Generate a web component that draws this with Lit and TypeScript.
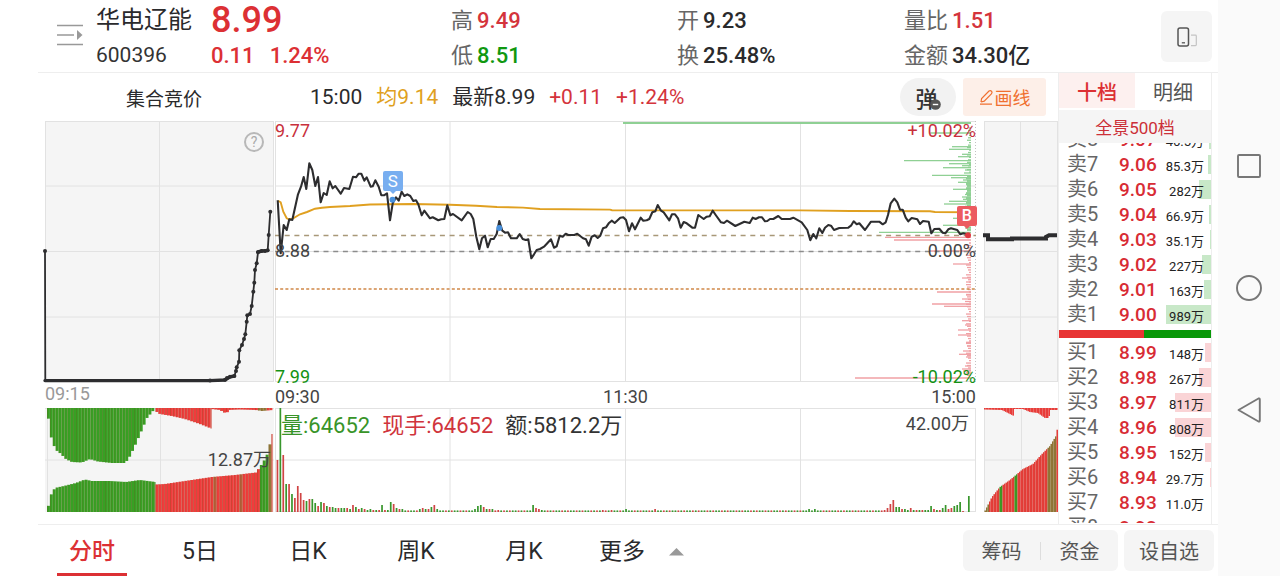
import { LitElement, html, svg, css } from "lit";
import { customElement, state } from "lit/decorators.js";
import { classMap } from "lit/directives/class-map.js";
import { styleMap } from "lit/directives/style-map.js";

type Point = [number, number];

const RED = "#f03c3c";
const GREEN = "#38a024";
const OLIVE = "#94793a";

const PRICE_LINE =
  "277.7,200.3 280.7,253.3 283.7,225 286.7,230 289.3,219.3 292.3,220 298,194.3 301,186.7 303.7,177 306.3,189 309.3,163.3 312.3,170 315.3,186 318,177 320.7,202.3 323.7,193 326.7,195 329.7,181.3 332.7,188.3 335.3,186 340.7,193.7 344,188 349.3,189 353,176.7 356,177.3 358.7,173.7 361.3,173.7 364.3,180.7 366.7,177.3 370.7,186.7 372.7,186.3 375.3,180.3 378.7,186.7 381.3,195.3 384,195.3 387,193.3 390,220.3 392.7,203.3 396,197.3 398.7,200.7 401.7,191.7 404.3,196 407.3,194.3 410.3,196 413.3,201 416,200.3 418.3,204.3 421.7,215.3 424.3,210.7 430,218.3 432.7,217.3 438.3,220.3 441.3,219.3 444.3,219 447.3,205.3 450.3,215.3 453,214 461.7,220.3 467.7,212 470.7,214 473.3,219 476.3,236.7 479.3,249.3 482,238.3 485,235.7 487.7,247.3 490.7,239 493.7,239 496.7,234 499.3,221 502.3,230.7 505,232.7 508,232.3 511,238.3 516.7,238.3 519.7,234 522.7,239 525.7,240 528.3,239.3 531.3,258.3 534,254.3 536.7,250 540,249 544,246.7 551,239.3 554,247.7 556.7,246.3 559.7,235.7 562.7,236.7 565.7,233.7 568.3,235 574.3,235 577.3,233.7 583,238.3 586,239.3 588.7,245.7 591.7,236.7 594.7,235.3 597.7,238 600.3,235.7 603,228.3 606,227.3 608.7,223.3 611.7,220.7 614.7,223 620.3,217.7 623.3,217.3 626,220 629,231.3 632,223.3 635,229.3 640.7,217.7 643.3,220.7 646.7,220.3 649.3,219 652.3,212.3 655.3,211.3 657.7,205 660.7,210.3 663.7,212.3 669.3,220.3 672,214.3 675,214.3 678,218.3 680.7,227.7 683.7,222 686.7,223.3 692.3,227.7 695,227.7 698.3,215 703.7,219 706.7,216.7 709.7,216.3 712.7,210.7 715.7,215 721,222.3 724,223 727,220.7 735.3,226 744.3,221.7 749.7,223 752.7,217.7 755.7,219 759,217.3 762,217.3 765,221.3 767.3,221 770,219 773.3,219 778.3,216 781.7,219 790,219 793.3,217.7 801.7,222.3 807.3,230 810.3,240.3 813.3,234 816.3,238.3 819.3,228.3 822.3,233 825,227.7 828.3,225 831,225.7 834,230 839.3,228 848.3,227.7 851,225.7 853.7,221.3 856.7,224.3 859.3,223.3 865,230 871,221.7 879.3,221.7 882.7,224.3 885.7,222.3 888,215 890.7,203.3 894.3,198.7 897.3,202.3 900,209.7 902.7,209.7 905.7,217.7 908.3,221.3 911.7,218 917.3,219.3 920,224 923,221 928.7,221.7 931.3,233.3 934.3,229 939.3,228.7 942.7,232.7 945.3,233.3 948.3,229.3 951,228.3 957.3,230 960.3,234.3 963.3,233.3 968.3,234.5";

const AVERAGE_LINE =
  "278,200.7 280.7,202.3 283.3,211.7 286.7,218.3 289,219.3 292,219 300,214.3 307,212 315,208.7 322,207.7 330,207 350,206 370,204.5 413,204 450,204.7 476,205.7 497,207 523,207.6 540,209 610,209.6 612,210.2 800,210.4 850,211 930,211.2 935,212 975,212.2";

const AUCTION_LINE: Point[] = [
  [45, 251], [45.3, 380.7], [210, 380.5], [225, 379.8], [227, 378], [230, 376.7], [234.3, 376], [236, 371], [236.7, 367.3],
  [239, 361.7], [239.3, 350.3], [242, 345], [244, 339], [245.3, 334.3], [246.7, 321.7], [247.3, 315.3], [250, 314],
  [251.7, 306], [253.3, 291.7], [254.3, 282.7], [255, 270], [256.7, 263.3], [258, 252.3], [261.7, 251], [265, 251],
  [267.7, 250.3], [268.7, 235], [270.3, 211.7],
];

/* Resting orders by price: [y, left end of the bar] */
const ASK_DEPTH: Point[] = [
  [133, 930], [146.7, 952], [149.3, 949], [154.3, 962], [156.7, 958], [160.7, 904], [163.7, 949], [165.7, 962], [167.7, 943],
  [170, 965], [173, 964], [175.3, 932], [177.7, 951], [180, 963], [182.3, 958], [184.7, 966], [187, 967], [189.3, 953],
  [192, 967], [194.5, 965], [197, 962], [199.3, 963], [201.3, 949], [204, 944], [206.3, 965], [218.3, 953], [225.3, 943],
  [228, 965], [232.3, 879],
];
const BID_DEPTH: Point[] = [
  [237.3, 885], [240, 894], [251, 930], [264, 953], [278, 962], [282, 966], [292, 937], [295, 966], [299, 962], [301.5, 965],
  [304, 932], [306.3, 944], [320.7, 962], [325, 965], [330, 958], [335, 958], [342.3, 966], [346, 967], [351, 963],
  [354.3, 959], [357, 966], [366, 965], [369, 962], [371, 963], [374, 965], [378, 855],
];

/* Minute volumes that rise above the floor: index -> [height, rising] */
const VOLUME: Record<number, [number, boolean]> = {
  0: [52, true], 1: [104, false], 2: [57, true], 3: [28, false], 4: [28, true], 5: [18, false], 6: [14, true], 7: [26, true],
  8: [19, true], 9: [12, true], 10: [11, false], 11: [13, true], 12: [13, false], 13: [9, false], 14: [6, true],
  15: [10, false], 16: [9, true], 17: [6, false], 18: [5, true], 19: [5, false], 20: [4, false], 21: [4, true], 22: [4, false],
  23: [4, false], 24: [4, true], 25: [3, false], 26: [7, true], 27: [5, false], 28: [3, true], 29: [4, false], 30: [3, true],
  31: [2, false], 32: [3, false], 33: [2, true], 34: [2, false], 35: [2, true], 36: [7, false], 37: [2, true], 38: [2, false],
  39: [10, false], 40: [8, true], 41: [4, false], 42: [3, true], 43: [3, false], 49: [3, false], 50: [4, true], 51: [3, false],
  52: [3, true], 53: [5, false], 54: [7, true], 55: [3, false], 68: [3, false], 69: [6, false], 70: [7, false], 71: [5, true],
  72: [3, false], 73: [3, true], 74: [3, false], 76: [2, true], 88: [7, false], 89: [4, true], 90: [3, true], 91: [2, false],
  112: [2, true], 115: [2, true], 120: [3, false], 130: [3, true], 183: [3, false], 185: [3, false], 209: [2, true],
  210: [4, true], 211: [8, true], 212: [12, true], 213: [5, false], 214: [5, false], 215: [3, true], 216: [3, false],
  217: [2, false], 218: [4, true], 219: [2, false], 220: [2, true], 221: [2, false], 222: [2, true], 223: [2, false],
  224: [2, false], 225: [6, false], 226: [3, true], 227: [2, false], 228: [2, true], 229: [4, false], 230: [7, false],
  231: [3, true], 232: [4, true], 233: [6, false], 234: [7, false], 235: [10, false], 236: [1, true], 237: [0, true],
  238: [16, false],
};

const SELLS: [string, string, string, number][] = [
  ["卖8", "9.07", "46.5万", 2],
  ["卖7", "9.06", "85.3万", 3],
  ["卖6", "9.05", "282万", 12],
  ["卖5", "9.04", "66.9万", 2],
  ["卖4", "9.03", "35.1万", 1],
  ["卖3", "9.02", "227万", 9],
  ["卖2", "9.01", "163万", 7],
  ["卖1", "9.00", "989万", 45],
];
const BUYS: [string, string, string, number][] = [
  ["买1", "8.99", "148万", 6],
  ["买2", "8.98", "267万", 12],
  ["买3", "8.97", "811万", 36],
  ["买4", "8.96", "808万", 36],
  ["买5", "8.95", "152万", 6],
  ["买6", "8.94", "29.7万", 1],
  ["买7", "8.93", "11.0万", 0],
  ["买8", "8.92", "98.2万", 0],
];

/* Height of a profile at x, by linear interpolation */
function at(profile: Point[], x: number): number {
  for (let i = 1; i < profile.length; i++) {
    const [x0, y0] = profile[i - 1];
    const [x1, y1] = profile[i];
    if (x <= x1) return x1 === x0 ? y1 : y0 + ((y1 - y0) * (x - x0)) / (x1 - x0);
  }
  return profile[profile.length - 1][1];
}

/* A run of close bars between a profile and a base line */
function bars(profile: Point[], base: number, step: number, colour: (x: number) => string, seam = 0.35) {
  const out = [];
  const end = profile[profile.length - 1][0];
  for (let x = profile[0][0]; x < end - 0.5; x += step) {
    const y = at(profile, x + step / 2);
    const w = Math.min(step, end - x);
    const c = colour(x);
    out.push(svg`<rect x=${x} y=${Math.min(y, base)} width=${w} height=${Math.abs(base - y)} fill=${c} />
      <rect x=${x} y=${Math.min(y, base)} width="0.8" height=${Math.abs(base - y)} fill="#6a5a20" opacity=${seam} />`);
  }
  return out;
}

const lines = (xs: number[], ys: number[], x0: number, x1: number, y0: number, y1: number) => svg`
  ${xs.map((x) => svg`<line x1=${x} x2=${x} y1=${y0} y2=${y1} stroke="#e2e2e2" />`)}
  ${ys.map((y) => svg`<line x1=${x0} x2=${x1} y1=${y} y2=${y} stroke="#e2e2e2" />`)}`;

const PRICE_ROWS = [121.5, 186, 251.5, 317, 381.5];

@customElement("auction-chart")
class AuctionChart extends LitElement {
  static styles = css`
    :host { display: block; position: relative; }
    svg { display: block; width: 100%; overflow: visible; }
    .price { height: 261px; background: #f5f5f5; }
    .volume { height: 104px; background: #f5f5f5; }
    .axis { height: 26px; line-height: 24px; font-size: 18px; color: #999; }
    .help {
      position: absolute; top: 11px; right: 10px; width: 20px; height: 20px; padding: 0;
      box-sizing: border-box; border: 2px solid #b8b8b8; border-radius: 50%; background: none;
      color: #aaa; font: 400 14px/16px Roboto, sans-serif;
    }
    .peak { position: absolute; right: 3px; bottom: 40px; font-size: 18px; line-height: 24px; color: #444; }
  `;
  render() {
    const unmatched: Point[] = [[47, 408], [50, 430], [52, 441], [56, 450], [60, 453], [66, 459], [72, 462], [82, 462.5], [90, 459], [98, 461.5], [112, 463], [124, 463], [128, 460], [134, 448], [141, 432], [147, 418], [155.5, 408]];
    const unmatchedBuy: Point[] = [[155.5, 411], [160, 414], [172, 416], [185, 419], [200, 424], [211.5, 428.5]];
    const tail: Point[] = [[211.5, 409], [220, 410], [227, 414], [228, 410], [240, 409.5], [256, 410], [262, 411], [272.5, 410]];
    const matched: Point[] = [[47, 512], [51, 495], [55, 488], [64, 486], [76, 483], [85, 479.5], [92, 481], [110, 481], [126, 482], [140, 480], [155.5, 482]];
    const matchedBuy: Point[] = [[155.5, 484.5], [165, 484], [185, 481], [212, 477], [235, 475], [256, 472.5], [260, 467], [264, 461], [268, 453], [272.5, 434]];
    const mix = (x: number) => (x > 259 && x < 267 ? GREEN : x >= 267 && x < 270 ? OLIVE : (x > 211 && x < 214) || (x > 237 && x < 240) ? "#b5603a" : RED);
    return html`
      <svg class="price" viewBox="45 121 229 261" preserveAspectRatio="none" role="img" aria-label="集合竞价">
        ${lines([45.5, 159.5, 273.5], PRICE_ROWS, 45, 274, 121, 382)}
        <polyline points=${AUCTION_LINE.map((p) => p.join()).join(" ")} fill="none" stroke="#2d2d2f" stroke-width="1.8" />
        <path d="M45 380.6H210L225 380L230 376.8L234.5 376M258 252L261.5 251L267.5 250.6" fill="none" stroke="#2d2d2f" stroke-width="3.4" stroke-linecap="round" />
        ${AUCTION_LINE.filter((_, i) => i !== 1).map(([x, y]) => svg`<circle cx=${x} cy=${y} r="2" fill="#2d2d2f" />`)}
      </svg>
      <button class="help" aria-label="help">?</button>
      <div class="axis">09:15</div>
      <svg class="volume" viewBox="45 408 229 104" preserveAspectRatio="none" aria-hidden="true">
        ${lines([47.5, 160.5], [408.5, 460], 45, 274, 408, 512)}
        ${bars(unmatched, 408, 2.9, () => GREEN)} ${bars(unmatchedBuy, 408, 2.9, () => RED)}
        ${bars(tail, 408, 2.9, (x) => (x > 257 && x < 266 ? OLIVE : RED))}
        ${bars(matched, 512, 2.9, () => GREEN)} ${bars(matchedBuy, 512, 2.9, mix)}
      </svg>
      <div class="peak">12.87万</div>
    `;
  }
}

@customElement("session-chart")
class SessionChart extends LitElement {
  static styles = css`
    :host { display: block; position: relative; font-size: 18px; color: #444; }
    svg { display: block; width: 100%; }
    .price { height: 261px; overflow: visible; }
    .volume { height: 104px; }
    .axis { height: 26px; line-height: 29px; display: flex; justify-content: space-between; }
    .label { position: absolute; line-height: 20px; }
    .left { left: 0; }
    .right { right: 0; }
    .high { top: 0; color: #c8303c; }
    .zero { top: 120px; }
    .low { top: 246px; color: #149214; }
    .mark {
      position: absolute; width: 20px; height: 20px; border-radius: 2px; color: #fff;
      font-size: 17px; line-height: 20px; text-align: center; transform: translateX(-50%);
    }
    .mark::after {
      content: ""; position: absolute; left: 7px; top: 20px;
      border: 3px solid transparent; border-top-color: inherit; border-bottom: 0;
    }
    .sell { left: 16.8%; top: 50px; background: #78aef0; border-color: #78aef0; }
    .buy { left: 98.7%; top: 85px; background: #ec5c60; border-color: #ec5c60; font-weight: 500; font-size: 16px; }
    .legend {
      position: absolute; left: 6px; top: 290px; display: flex; gap: 12px;
      font-size: 22px; line-height: 30px; white-space: nowrap; color: #333;
    }
    .green { color: #389428; }
    .red { color: #d0343c; }
    .top { position: absolute; right: 7px; top: 290px; line-height: 26px; }
  `;
  render() {
    const ticks = (from: number, to: number) => Array.from({ length: Math.floor((to - from) / 2.45) }, (_, i) => from + i * 2.45);
    return html`
      <svg class="price" viewBox="275 121 701 261" preserveAspectRatio="none" role="img" aria-label="分时">
        ${lines([275.5, 450, 625.5, 800.5], PRICE_ROWS, 275, 976, 121, 382)}
        <line x1="975.5" x2="975.5" y1="121" y2="382" stroke="#c2c2c2" stroke-dasharray="1 2" />
        <g stroke="#8fd094" stroke-width="1.3">
          <line x1="623" x2="971" y1="123" y2="123" stroke-width="2" />
          ${ASK_DEPTH.map(([y, x]) => svg`<line x1=${x} x2="971" y1=${y} y2=${y} />`)}
          ${ticks(128, 176).map((y, i) => svg`<line x1=${969 - (i % 3)} x2="971" y1=${y} y2=${y} />`)}
          ${ticks(176, 234).map((y, i) => svg`<line x1=${967 - (i % 2)} x2="971" y1=${y} y2=${y} stroke-width="2" />`)}
        </g>
        <g stroke="#f0a0a4" stroke-width="1.3">
          ${BID_DEPTH.map(([y, x]) => svg`<line x1=${x} x2="971" y1=${y} y2=${y} />`)}
          ${ticks(243, 380).map((y, i) => svg`<line x1=${969 - ((i * 7) % 4)} x2="971" y1=${y} y2=${y} />`)}
        </g>
        <line x1="275" x2="976" y1="235.5" y2="235.5" stroke="#a89878" stroke-width="1.3" stroke-dasharray="5 4.7" />
        <line x1="275" x2="976" y1="251.5" y2="251.5" stroke="#8c8c8c" stroke-width="1.3" stroke-dasharray="5 4.7" />
        <line x1="275" x2="976" y1="289" y2="289" stroke="#d08848" stroke-width="1.7" stroke-dasharray="3 2.2" />
        <polyline points=${AVERAGE_LINE} fill="none" stroke="#e0a020" stroke-width="1.9" />
        <polyline points=${PRICE_LINE} fill="none" stroke="#2d2d2f" stroke-width="2.1" stroke-linejoin="round" />
        <circle cx="392.5" cy="199.7" r="3" fill="#4890dc" />
        <circle cx="499.3" cy="228" r="3" fill="#4890dc" />
        <circle cx="968" cy="235.3" r="3" fill="#e03840" />
      </svg>
      <span class="label left high">9.77</span><span class="label right high">+10.02%</span>
      <span class="label left zero">8.88</span><span class="label right zero">0.00%</span>
      <span class="label left low">7.99</span><span class="label right low">-10.02%</span>
      <span class="mark sell">S</span><span class="mark buy">B</span>
      <div class="axis"><span>09:30</span><span>11:30</span><span>15:00</span></div>
      <svg class="volume" viewBox="275 408 701 104" preserveAspectRatio="none" aria-hidden="true">
        ${lines([275.5, 450, 625.5, 800.5, 975.5], [408.5, 460, 511.5], 275, 976, 408, 512)}
        ${Array.from({ length: 239 }, (_, i) => {
          const [h, up] = VOLUME[i] ?? [1.6, (i * 7) % 5 < 2];
          return svg`<rect x=${276.6 + i * 2.905} y=${512 - h} width="1.7" height=${h} fill=${up ? "#d04444" : "#38962c"} />`;
        })}
      </svg>
      <div class="legend"><span class="green">量:64652</span><span class="red">现手:64652</span><span>额:5812.2万</span></div>
      <div class="top">42.00万</div>
    `;
  }
}

@customElement("after-chart")
class AfterChart extends LitElement {
  static styles = css`
    :host { display: block; }
    svg { display: block; width: 100%; background: #f5f5f5; }
    .price { height: 261px; margin-bottom: 26px; overflow: visible; }
    .volume { height: 104px; }
  `;
  render() {
    const buy: Point[] = [[984.5, 512], [992, 497], [1000, 487], [1010, 480], [1016, 475], [1023, 469], [1033, 464], [1042, 454], [1050, 446], [1056, 436], [1058, 426]];
    const rest: Point[] = [[984, 409.5], [1002, 410], [1008, 413], [1014, 416], [1014.5, 409], [1023, 409], [1030, 412], [1038, 413], [1045, 418], [1049, 418], [1050, 410], [1058, 410]];
    return html`
      <svg class="price" viewBox="984 121 74 261" preserveAspectRatio="none" role="img" aria-label="盘后">
        ${lines([984.5, 1020.5, 1057.5], PRICE_ROWS, 984, 1058, 121, 382)}
        <path d="M983 235.3H988V239.2H1012V238.4H1046V237L1049 235.3H1057" fill="none" stroke="#2d2d2f" stroke-width="4" />
      </svg>
      <svg class="volume" viewBox="984 408 74 104" preserveAspectRatio="none" aria-hidden="true">
        ${lines([984.5, 1021.5], [408.5, 460], 984, 1058, 408, 512)}
        ${bars(rest, 408, 1.5, () => RED, 0.1)}
        ${bars(buy, 512, 1.5, (x) => (x < 989 ? OLIVE : (x > 999 && x < 1001.5) || (x > 1013 && x < 1017.5) ? GREEN : x > 1046 && x < 1056 ? OLIVE : RED), 0.18)}
      </svg>
    `;
  }
}

@customElement("order-book")
class OrderBook extends LitElement {
  @state() private detail = false;
  static styles = css`
    :host { display: flex; flex-direction: column; box-sizing: border-box; border: 1px solid #eee; border-top: 0; border-bottom: 0; background: #fff; }
    button { border: 0; padding: 0; font-family: inherit; cursor: pointer; }
    .tabs { display: grid; grid-template-columns: 1fr 1fr; height: 35px; margin-bottom: 2px; }
    .tab { padding-top: 2px; background: #fff; color: #555; font-size: 20px; }
    .on { background: #fdf0ef; color: #dc3034; font-weight: 500; }
    .all { height: 33px; background: #f5f5f5; color: #cc3038; font-size: 17px; }
    .sells { height: 184px; display: flex; align-items: flex-end; overflow: hidden; }
    .buys { height: 183px; overflow: hidden; }
    .ratio { display: flex; height: 8px; margin: 3px 0 2px; }
    .in { flex: 56; background: #e83434; }
    .out { flex: 44; background: #089808; }
    table { width: 100%; table-layout: fixed; border-collapse: collapse; }
    td, th { height: 25px; padding: 0; line-height: 25px; white-space: nowrap; }
    .name { width: 60px; padding-left: 8px; box-sizing: border-box; text-align: left; font-weight: 400; font-size: 20px; color: #666; }
    .cost { width: 38px; font-size: 19px; font-weight: 500; color: #d82c34; }
    .size { position: relative; padding-right: 7px; font-size: 13px; text-align: right; color: #222; }
    .size span { position: relative; top: 2px; }
    .fill { position: absolute; right: 0; top: 3px; height: 19px; background: #fad4d6; }
    .sells .fill { background: #c8e8c8; }
  `;
  private rows(list: typeof SELLS) {
    return html`<table><tbody>
      ${list.map(([name, price, size, width]) => html`<tr>
        <th class="name" scope="row">${name}</th>
        <td class="cost">${price}</td>
        <td class="size"><div class="fill" style=${styleMap({ width: `${width}px` })}></div><span>${size}</span></td>
      </tr>`)}
    </tbody></table>`;
  }
  render() {
    return html`
      <div class="tabs">
        <button class=${classMap({ tab: true, on: !this.detail })} @click=${() => (this.detail = false)}>十档</button>
        <button class=${classMap({ tab: true, on: this.detail })} @click=${() => (this.detail = true)}>明细</button>
      </div>
      <button class="all">全景500档</button>
      <div class="sells">${this.rows(SELLS)}</div>
      <div class="ratio"><div class="in"></div><div class="out"></div></div>
      <div class="buys">${this.rows(BUYS)}</div>
    `;
  }
}

@customElement("app-root")
class AppRoot extends LitElement {
  @state() private period = "分时";
  static styles = css`
    :host {
      display: flex; min-height: 100vh; background: #fff; color: #2a2a2c;
      font-family: Roboto, "Noto Sans CJK SC", sans-serif;
    }
    button { border: 0; padding: 0; font-family: inherit; color: inherit; background: none; cursor: pointer; }
    svg { display: block; }
    .main { flex: 1; min-width: 0; padding-left: 38px; display: flex; flex-direction: column; }
    .header {
      display: grid; grid-template-columns: 39px 115px 240fr 226fr 227fr 257fr 51px;
      height: 72px; padding: 0 6px 0 19px; border-bottom: 1px solid #eee; white-space: nowrap;
    }
    .menu { align-self: start; margin-top: 24px; width: 26px; height: 22px; }
    .pair { padding-top: 3px; font-size: 22px; line-height: 35px; }
    .title { font-size: 24px; }
    .code { font-size: 21px; color: #333; }
    .quote { font-weight: 500; color: #dc3034; }
    .last { font-size: 36px; }
    .change { display: flex; gap: 15px; }
    .key { color: #666; margin-right: 4px; }
    .value { font-weight: 500; }
    .up { color: #d4343c; }
    .down { color: #109810; }
    .phone { width: 51px; height: 51px; margin-top: 11px; border-radius: 6px; background: #f5f5f5; display: grid; place-items: center; }
    .body { display: flex; }
    .charts { flex: 1; min-width: 0; }
    .order { width: 154px; margin-right: 6px; }
    .toolbar { display: flex; align-items: center; height: 48px; padding: 0 12px 0 88px; font-size: 21px; white-space: nowrap; }
    .auction { width: 184px; font-size: 19px; }
    .ticker { flex: 1; display: flex; align-items: baseline; gap: 14px; line-height: 32px; }
    .avg { color: #e0a020; }
    .pop { display: flex; align-items: center; justify-content: center; width: 56px; height: 38px; margin-right: 7px; border-radius: 19px; background: #f2f2f2; font-size: 22px; font-weight: 500; color: #333; }
    .pop svg { flex: none; margin: 14px 0 0 -8px; }
    .draw { display: flex; align-items: center; justify-content: center; gap: 1px; width: 83px; height: 38px; border-radius: 3px; background: #fdefe8; font-size: 18px; color: #f07030; }
    .panes { display: grid; grid-template-columns: 229fr 1px 701fr 8px 74fr; padding: 0 0 12px 7px; }
    .session { grid-column: 3; }
    .after { grid-column: 5; }
    .footer { display: flex; align-items: center; height: 51px; padding-right: 4px; border-top: 1px solid #eee; white-space: nowrap; }
    .periods { display: flex; flex: 1; align-self: stretch; }
    .period { position: relative; width: 108px; padding-top: 2px; font-size: 23px; line-height: 49px; }
    .more { display: flex; align-items: center; gap: 24px; margin-left: 21px; }
    .chosen { color: #dc3034; font-weight: 500; }
    .chosen::after { content: ""; position: absolute; left: 19px; right: 19px; bottom: 0; height: 3px; background: #dc3034; }
    .group { display: flex; align-items: center; height: 41px; border-radius: 6px; background: #f5f5f5; font-size: 20px; color: #555; }
    .group + .group { margin-left: 6px; }
    .group button { font-size: 20px; width: 77px; }
    .group button.watch { width: 90px; }
    .rule { width: 1px; height: 18px; background: #ddd; }
    .system { width: 62px; background: #fafafa; display: flex; flex-direction: column; align-items: center; justify-content: center; gap: 96px; }
  `;
  private stat(key: string, value: string, tone = "") {
    return html`<div><span class="key">${key}</span><span class="value ${tone}">${value}</span></div>`;
  }
  render() {
    return html`
      <div class="main">
        <header class="header">
          <button class="menu" aria-label="列表">
            <svg width="26" height="22" viewBox="0 0 26 22"><path d="M0 1.5H26M0 11H17M0 20.5H26" stroke="#999" stroke-width="1.6" /><path d="M20 6L25.5 11L20 16Z" fill="#999" /></svg>
          </button>
          <div class="pair"><div class="title">华电辽能</div><div class="code">600396</div></div>
          <div class="pair quote"><div class="last">8.99</div><div class="change"><span>0.11</span><span>1.24%</span></div></div>
          <div class="pair">${this.stat("高", "9.49", "up")}${this.stat("低", "8.51", "down")}</div>
          <div class="pair">${this.stat("开", "9.23")}${this.stat("换", "25.48%")}</div>
          <div class="pair">${this.stat("量比", "1.51", "up")}${this.stat("金额", "34.30亿")}</div>
          <button class="phone" aria-label="竖屏">
            <svg width="20" height="20" viewBox="0 0 20 20" fill="none">
              <rect x="1" y="1" width="10.5" height="18" rx="2" stroke="#555" stroke-width="1.5" />
              <path d="M4.8 15.8H8" stroke="#555" stroke-width="1.3" />
              <path d="M14 8.2H18.5Q19.3 8.2 19.3 9V17.8Q19.3 18.6 18.5 18.6H14" stroke="#c4c4c4" stroke-width="1.2" />
            </svg>
          </button>
        </header>
        <div class="body">
          <div class="charts">
            <div class="toolbar">
              <span class="auction">集合竞价</span>
              <div class="ticker">
                <span>15:00</span><span class="avg">均9.14</span><span>最新8.99</span><span class="up">+0.11</span><span class="up">+1.24%</span>
              </div>
              <button class="pop">弹<svg width="11" height="11" viewBox="0 0 11 11"><circle cx="5.5" cy="5.5" r="5.3" fill="#555" /><path d="M2.8 5.5H8.2" stroke="#fff" stroke-width="1.4" /></svg></button>
              <button class="draw">
                <svg width="15" height="16" viewBox="0 0 15 16" fill="none" stroke="#f07030" stroke-width="1.2"><path d="M2 13L2.6 9.6L10 2Q11.6 1 12.8 2.6Q13.4 3.8 12.4 4.8L5.2 12.2L2 13M1 15.2H13" /></svg>画线
              </button>
            </div>
            <div class="panes">
              <auction-chart></auction-chart>
              <session-chart class="session"></session-chart>
              <after-chart class="after"></after-chart>
            </div>
          </div>
          <order-book class="order"></order-book>
        </div>
        <footer class="footer">
          <nav class="periods">
            ${["分时", "5日", "日K", "周K", "月K"].map((name) => html`
              <button class=${classMap({ period: true, chosen: this.period === name })} @click=${() => (this.period = name)}>${name}</button>`)}
            <button class="period more">更多<svg width="15" height="8" viewBox="0 0 15 8"><path d="M7.5 0L15 7.5H0Z" fill="#999" /></svg></button>
          </nav>
          <div class="group"><button>筹码</button><span class="rule"></span><button>资金</button></div>
          <div class="group"><button class="watch">设自选</button></div>
        </footer>
      </div>
      <nav class="system">
        <button aria-label="最近"><svg width="26" height="26" viewBox="0 0 26 26"><rect x="2" y="2" width="22" height="22" rx="1" fill="none" stroke="#777" stroke-width="1.9" /></svg></button>
        <button aria-label="主页"><svg width="26" height="26" viewBox="0 0 26 26"><circle cx="13" cy="13" r="12" fill="none" stroke="#777" stroke-width="1.9" /></svg></button>
        <button aria-label="返回"><svg width="26" height="26" viewBox="0 0 26 26"><path d="M2.5 13L22.5 1.5Q23.8 1 23.8 2.5V23.5Q23.8 25 22.5 24.5Z" fill="none" stroke="#777" stroke-width="1.9" stroke-linejoin="round" /></svg></button>
      </nav>
    `;
  }
}
